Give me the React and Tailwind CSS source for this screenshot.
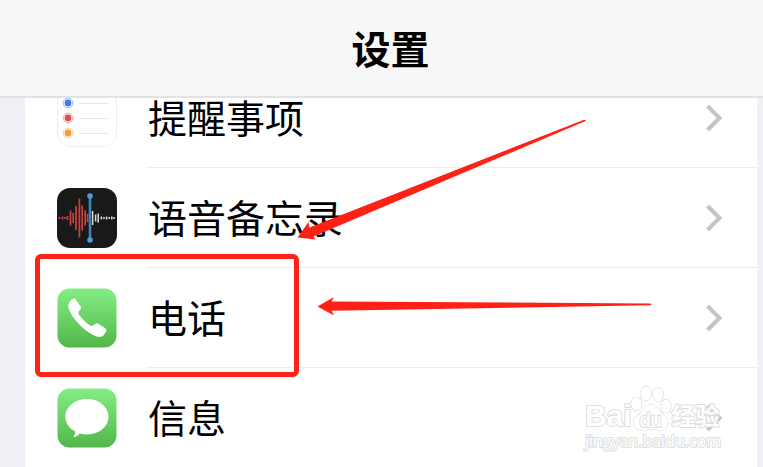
import { useId } from 'react';

function RemindersIcon() {
  const dots = [
    { y: 35, color: '#3f7ee8' },
    { y: 50, color: '#e0504c' },
    { y: 65, color: '#eba23c' },
  ];

  return (
    <svg viewBox="0 20 60 60" className="w-[60px] h-[60px] shrink-0" aria-hidden="true">
      <rect x="0.5" y="20.5" width="59" height="58" rx="13" fill="#fff" stroke="#ededed" />
      {dots.map((dot) => (
        <g key={dot.y}>
          <circle cx="11" cy={dot.y} r="4.8" fill="#fff" stroke={dot.color} strokeOpacity="0.5" />
          <circle cx="11" cy={dot.y} r="3.4" fill={dot.color} />
          <path d={`M22 ${dot.y + 0.5}H52`} stroke="#e8e8e8" />
        </g>
      ))}
    </svg>
  );
}

function VoiceMemosIcon() {
  // [x, half height]
  const red = [[2.5, 1], [5.5, 1.5], [8, 1], [10.5, 2], [13.5, 7.5], [16.2, 5], [19, 12], [22.4, 19.5], [25.2, 12.5], [28.2, 7.5], [30.6, 4]];
  const white = [[35.6, 7], [38.6, 3.5], [41.2, 4.5], [44.4, 1.5], [47, 1], [49.6, 1.5], [52.2, 1], [54.8, 1.5], [57, 1]];

  return (
    <svg viewBox="0 0 60 60" className="w-[60px] h-[60px] shrink-0" aria-hidden="true">
      <rect width="60" height="60" rx="13" fill="#191919" />
      {red.map(([x, h]) => (
        <path key={x} d={`M${x} ${30 - h}V${30 + h}`} stroke="#d0413e" strokeWidth="1.7" />
      ))}
      {white.map(([x, h]) => (
        <path key={x} d={`M${x} ${30 - h}V${30 + h}`} stroke="#dedcd3" strokeWidth="1.5" />
      ))}
      <path d="M33 8V52" stroke="#3c86bd" strokeWidth="2.6" />
      <circle cx="33" cy="8" r="2.8" fill="#4a9de0" />
      <circle cx="33" cy="52" r="2.8" fill="#4a9de0" />
    </svg>
  );
}

function GreenIcon({ children }) {
  const id = useId();

  return (
    <svg viewBox="0 0 60 60" className="w-[60px] h-[60px] shrink-0" aria-hidden="true">
      <defs>
        <linearGradient id={id} x1="0" y1="0" x2="0" y2="1">
          <stop offset="0" stopColor="#84ee84" />
          <stop offset="1" stopColor="#51b74a" />
        </linearGradient>
      </defs>
      <rect x="0.5" y="0.5" width="59" height="59" rx="12" fill={`url(#${id})`} />
      {children}
    </svg>
  );
}

function PhoneIcon() {
  return (
    <GreenIcon>
      <path
        d="M12.3 14.4C13.6 12 15.8 10.6 17.2 10.5C18.2 10.5 18.8 11.4 19.4 12.4L23.6 18.3C24.3 19.5 24.2 20.3 23.4 21.3L21.8 23.4C21.1 24.5 21.3 25.6 21.9 26.6C23.9 29.8 29.6 35.3 33.2 37.5C34.4 38.2 35.3 38 36.2 37.2L38.2 35.9C39.3 35.1 40.4 35.2 41.6 35.9L48 40C49.4 41 49.7 42 49 43.5C48.2 45.7 46.8 47.4 45.2 48.2C42.8 49.4 39.8 48.7 36.6 47.2C26.3 42.2 14.6 29.8 11.7 20.7C10.9 18.1 11.2 16.2 12.3 14.4Z"
        fill="#fff"
      />
    </GreenIcon>
  );
}

function MessagesIcon() {
  return (
    <GreenIcon>
      <path
        d="M30 11C42 11 51.5 18.8 51.5 28.8C51.5 38.8 42 46.4 30 46.4C27.4 46.4 25 46.1 22.8 45.5C21.2 47.5 18.8 49 16.2 49.2C17.4 47.6 18.2 45.4 18.2 43.4C12.2 40.3 8.3 35.1 8.3 28.8C8.3 18.8 18 11 30 11Z"
        fill="#fff"
      />
    </GreenIcon>
  );
}

function Chevron() {
  return (
    <svg viewBox="0 0 18 30" className="w-[18px] h-[30px] ml-auto shrink-0" fill="none" aria-hidden="true">
      <path d="M2.5 3L14.5 15L2.5 27" stroke="#c4c4c6" strokeWidth="4" />
    </svg>
  );
}

function Watermark() {
  return (
    <div className="absolute right-[42px] bottom-4 text-white opacity-90 [paint-order:stroke_fill] [-webkit-text-stroke:2px_#dcdcdc]">
      <div className="flex items-end h-[46px]">
        <span className="font-['Liberation_Sans'] font-bold text-[30px] leading-[30px]">Bai</span>
        <span className="relative w-[42px] h-[46px] -ml-0.5 text-center">
          <svg viewBox="0 0 42 46" className="absolute inset-0" aria-hidden="true">
            <g fill="#fff" stroke="#d6d6d6" strokeWidth="1.2">
              <ellipse cx="6.3" cy="18.8" rx="5.2" ry="6.8" />
              <ellipse cx="15.7" cy="8.6" rx="5.3" ry="7.2" />
              <ellipse cx="28" cy="9.6" rx="5.2" ry="6.8" />
              <ellipse cx="36" cy="21.3" rx="5" ry="6.6" />
              <path d="M21 19.5C26 19.5 28 24 31.5 28C35 31.5 38 33.5 38 38C38 42.5 35 45 31 45C27.5 45 25 44.2 21 44.2C17 44.2 15 45 11.5 45C7 45 3.5 42.5 3.5 38C3.5 33.5 7 31.5 10.5 28C14 24 16 19.5 21 19.5Z" />
            </g>
          </svg>
          <span className="absolute inset-x-0 bottom-0 font-['Liberation_Sans'] text-[20px] leading-[22px]">du</span>
        </span>
        <span className="font-['Noto_Sans_CJK_SC',sans-serif] font-bold text-[24px] leading-[32px]">经验</span>
      </div>
      <div className="font-['Open_Sans'] text-[16px] leading-[20px]">jingyan.baidu.com</div>
    </div>
  );
}

const items = [
  { label: '提醒事项', Icon: RemindersIcon },
  { label: '语音备忘录', Icon: VoiceMemosIcon },
  { label: '电话', Icon: PhoneIcon, highlighted: true },
  { label: '信息', Icon: MessagesIcon },
];

export default function App() {
  return (
    <div className="relative flex flex-col h-screen overflow-hidden bg-[#f1f0f6] text-black font-['Noto_Sans_CJK_SC',sans-serif]">
      <header className="z-10 flex items-center justify-center h-[98px] shrink-0 pl-[18px] pb-0.5 border-b-2 border-[#e2e2e4] bg-[#f7f7f7]">
        <h1 className="text-[39px] leading-[48px] font-bold">设置</h1>
      </header>

      <main className="flex-1 pl-[25px] pr-[6px]">
        {/* list is scrolled a little under the header */}
        <ul className="-mt-[30px] bg-white">
          {items.map(({ label, Icon, highlighted }) => (
            <li key={label} className="relative">
              <a href="#" className="flex items-center h-[100px] pl-8">
                <Icon />
                <span className="flex items-center flex-1 h-full ml-[30px] pl-px pr-[34px] border-b border-[#ededef]">
                  <span className="pb-1 text-[39px] leading-[48px]">{label}</span>
                  <Chevron />
                </span>
              </a>
              {highlighted && (
                <div className="absolute z-10 left-[10px] -top-[14px] w-[264px] h-[123px] border-[5px] border-[#fb2419] rounded-md" />
              )}
            </li>
          ))}
        </ul>
      </main>

      <Watermark />

      {/* hand drawn arrows */}
      <svg width="763" height="467" className="absolute top-0 left-0 z-20 pointer-events-none" fill="#ff2116" aria-hidden="true">
        <path d="M297.5 237.5L308.5 222L309.5 227.5L584 119.8Q587 119.7 585.5 121L313.5 236.5L315.5 239.5Z" />
        <path d="M317.5 306.5L334 297L331.5 301.5L650 303.5Q653 304.3 650 305.2L331.5 310.8L334 315.5Z" />
      </svg>
    </div>
  );
}
